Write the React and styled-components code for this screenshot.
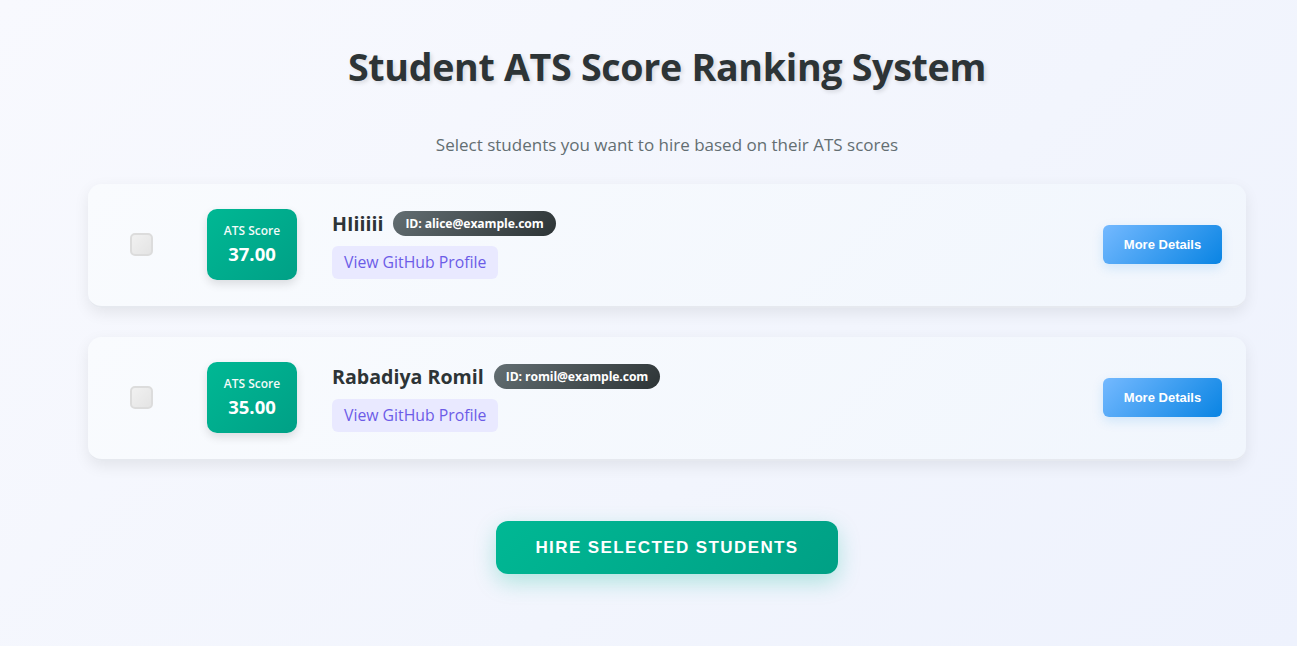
import React, { useState } from 'react';
import styled, { createGlobalStyle } from 'styled-components';

const GlobalStyle = createGlobalStyle`
    html, body {
        margin: 0;
        padding: 0;
    }

    body {
        font-family: "Open Sans", "Noto Sans", sans-serif;
        background: linear-gradient(135deg, #f8f9fe 0%, #f2f5fd 60%, #eef2fd 100%);
        min-height: 100vh;
        color: #2d3436;
    }
`;

const Page = styled.div`
    padding: 40px 0 60px 88px;
`;

const Container = styled.div`
    width: 1158px;
`;

const Title = styled.h1`
    margin: 0;
    text-align: center;
    font-size: 37.6px;
    line-height: 54px;
    font-weight: 700;
    color: #2d3436;
    text-shadow: 2px 2px 4px rgba(0, 0, 0, 0.12);
    letter-spacing: -0.3px;
`;

const Subtitle = styled.p`
    margin: 39px 0 28px;
    text-align: center;
    font-size: 17px;
    line-height: 23px;
    color: #636e72;
`;

const List = styled.div`
    display: flex;
    flex-direction: column;
    gap: 29px;
`;

const Card = styled.div`
    display: flex;
    align-items: center;
    padding: 25px 24px 26px 42px;
    border-radius: 14px;
    background: linear-gradient(135deg, #f9fbfe 0%, #f1f6fd 100%);
    border-bottom: 2px solid #e6e9ef;
    box-shadow: 0 5px 15px rgba(0, 0, 0, 0.08);
`;

const Check = styled.span`
    width: 23px;
    height: 23px;
    box-sizing: border-box;
    border-radius: 5px;
    border: 2px solid #dcdcdc;
    background: linear-gradient(135deg, #f1f1f1, #e4e4e4);
    flex-shrink: 0;
    cursor: pointer;
    ${p => p.$checked && `
        background: #00b894;
        border-color: #00a085;
    `}
`;

const ScoreBadge = styled.div`
    width: 90px;
    height: 71px;
    margin-left: 54px;
    border-radius: 10px;
    background: linear-gradient(135deg, #00b894 0%, #00a086 100%);
    box-shadow: 0 4px 10px rgba(0, 0, 0, 0.12);
    color: #fff;
    display: flex;
    flex-direction: column;
    align-items: center;
    justify-content: center;
    flex-shrink: 0;
`;

const ScoreLabel = styled.span`
    font-size: 12px;
    font-weight: 600;
    line-height: 16px;
    opacity: 0.95;
`;

const ScoreValue = styled.span`
    font-size: 18.5px;
    font-weight: 700;
    line-height: 24px;
    margin-top: 3px;
`;

const Info = styled.div`
    margin-left: 35px;
    display: flex;
    flex-direction: column;
    align-items: flex-start;
    gap: 10px;
    flex: 1;
`;

const NameRow = styled.div`
    display: flex;
    align-items: center;
    gap: 10px;
`;

const Name = styled.span`
    font-size: 19.6px;
    font-weight: 700;
    color: #2d3436;
    line-height: 25px;
`;

const IdPill = styled.span`
    background: linear-gradient(135deg, #636e72 0%, #2d3436 100%);
    color: #fff;
    font-size: 12.2px;
    font-weight: 700;
    line-height: 25px;
    padding: 0 12px;
    border-radius: 13px;
    letter-spacing: -0.1px;
`;

const GithubLink = styled.a`
    display: inline-block;
    background: #e9e9ff;
    color: #6c5ce7;
    font-size: 15.8px;
    line-height: 33px;
    padding: 0 12px;
    border-radius: 6px;
    text-decoration: none;
    cursor: pointer;
`;

const DetailsButton = styled.button`
    width: 119px;
    height: 39px;
    border: none;
    border-radius: 6px;
    background: linear-gradient(135deg, #74b9ff 0%, #0984e3 100%);
    box-shadow: 0 4px 12px rgba(9, 132, 227, 0.15);
    color: #fff;
    font-family: "Liberation Sans", Arial, sans-serif;
    font-size: 13px;
    font-weight: 700;
    cursor: pointer;
    flex-shrink: 0;
`;

const Footer = styled.div`
    display: flex;
    justify-content: center;
    margin-top: 60px;
`;

const HireButton = styled.button`
    width: 342px;
    height: 53px;
    border: none;
    border-radius: 12px;
    background: linear-gradient(135deg, #00b894 0%, #00a085 100%);
    box-shadow: 0 8px 22px rgba(0, 184, 148, 0.28);
    color: #fff;
    font-family: "Liberation Sans", Arial, sans-serif;
    font-size: 17px;
    font-weight: 700;
    letter-spacing: 1.4px;
    text-transform: uppercase;
    cursor: pointer;
`;

const students = [
    { id: 'alice@example.com', name: 'HIiiiii', score: 37 },
    { id: 'romil@example.com', name: 'Rabadiya Romil', score: 35 },
];

export default function App() {
    const [selected, setSelected] = useState({});

    const toggle = (id) => {
        setSelected({ ...selected, [id]: !selected[id] });
    };

    return (
        <Page>
            <GlobalStyle/>
            <Container>
                <Title>Student ATS Score Ranking System</Title>
                <Subtitle>Select students you want to hire based on their ATS scores</Subtitle>

                <List>
                    {students.map(student => (
                        <Card key={student.id}>
                            <Check $checked={selected[student.id]} onClick={() => toggle(student.id)}/>
                            <ScoreBadge>
                                <ScoreLabel>ATS Score</ScoreLabel>
                                <ScoreValue>{student.score.toFixed(2)}</ScoreValue>
                            </ScoreBadge>
                            <Info>
                                <NameRow>
                                    <Name>{student.name}</Name>
                                    <IdPill>ID: {student.id}</IdPill>
                                </NameRow>
                                <GithubLink>View GitHub Profile</GithubLink>
                            </Info>
                            <DetailsButton>More Details</DetailsButton>
                        </Card>
                    ))}
                </List>

                <Footer>
                    <HireButton>Hire Selected Students</HireButton>
                </Footer>
            </Container>
        </Page>
    );
}
